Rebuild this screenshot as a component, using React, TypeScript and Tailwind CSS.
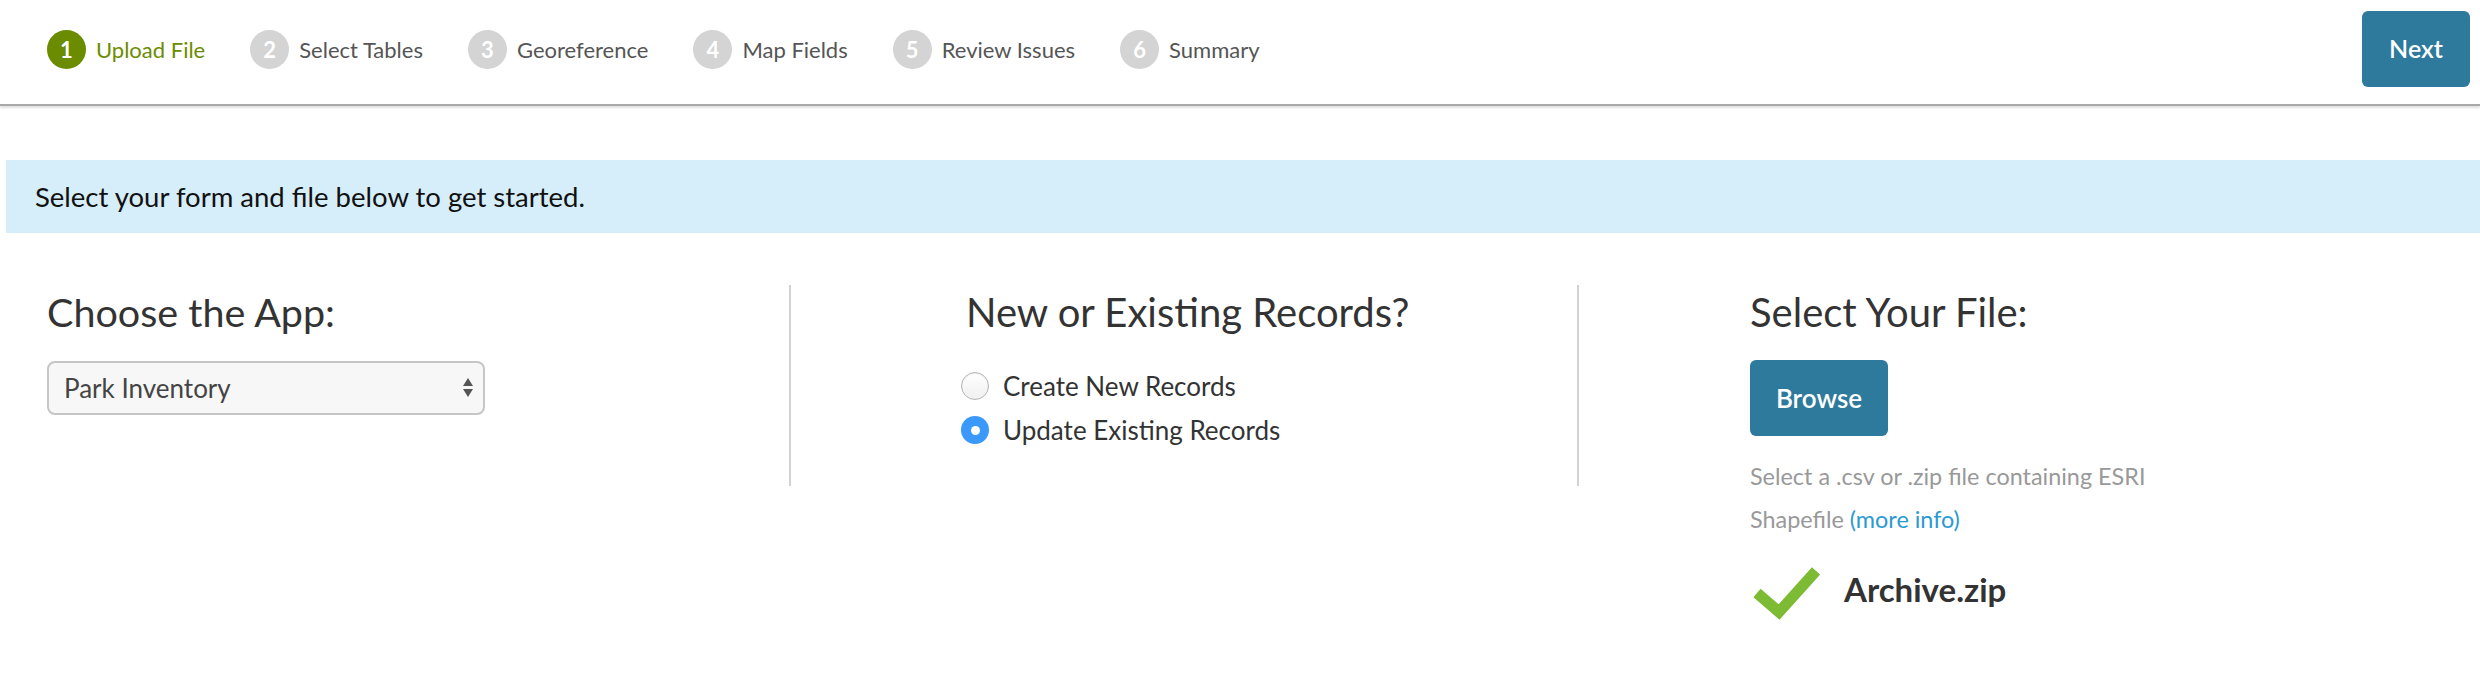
const steps = [
  "Upload File",
  "Select Tables",
  "Georeference",
  "Map Fields",
  "Review Issues",
  "Summary",
];

function Step({ n, label, active }: { n: number; label: string; active: boolean }) {
  return (
    <div className="flex items-center gap-[10px]">
      <div
        className={
          active
            ? "flex h-[39px] w-[39px] items-center justify-center rounded-full bg-[#6b8c00] text-[22px] font-bold text-white"
            : "flex h-[39px] w-[39px] items-center justify-center rounded-full bg-[#d4d4d4] text-[22px] font-bold text-white"
        }
      >
        {n}
      </div>
      <span className={active ? "text-[22px] text-[#6b8c00]" : "text-[22px] text-[#555]"}>
        {label}
      </span>
    </div>
  );
}

function Radio({ checked, label }: { checked: boolean; label: string }) {
  return (
    <div className="flex h-[44px] items-center gap-[14px]">
      {checked ? (
        <div className="flex h-[28px] w-[28px] items-center justify-center rounded-full bg-[#3b99fc]">
          <div className="h-[9px] w-[9px] rounded-full bg-white" />
        </div>
      ) : (
        <div className="h-[28px] w-[28px] rounded-full border border-[#b4b4b4] bg-gradient-to-b from-white to-[#f0f0f0] shadow-[inset_0_1px_1px_rgba(0,0,0,0.08)]" />
      )}
      <span className="text-[26px] text-[#333]">{label}</span>
    </div>
  );
}

export default function App() {
  return (
    <div className="min-h-[692px] bg-white font-['Lato','Liberation_Sans',sans-serif]">
      {/* wizard header */}
      <header className="flex h-[106px] items-center justify-between border-b-2 border-[#a9a9a9] pl-[47px] pr-[10px] shadow-[0_2px_2px_rgba(0,0,0,0.12)]">
        <div className="mb-[5px] flex items-center gap-[45px]">
          {steps.map((s, i) => (
            <Step key={s} n={i + 1} label={s} active={i === 0} />
          ))}
        </div>
        <button className="mb-[6px] h-[76px] w-[108px] rounded-[6px] bg-[#2e7a9c] text-[25px] font-semibold text-white">
          Next
        </button>
      </header>

      <div className="ml-[6px] mt-[54px] flex h-[73px] items-center bg-[#d6eefa] pl-[29px]">
        <p className="text-[27.5px] text-[#111]">Select your form and file below to get started.</p>
      </div>

      <div className="mt-[52px] flex items-start">
        <div className="h-[201px] w-[791px] border-r-2 border-[#d2d2d2] pl-[47px] pt-[3px]">
          <h2 className="text-[39.5px] leading-[48px] text-[#333]">Choose the App:</h2>
          <div className="mt-[25px] flex h-[54px] w-[438px] items-center justify-between rounded-[8px] border-2 border-[#c6c6c6] bg-[#f7f7f7] pl-[15px] pr-[9px]">
            <span className="text-[26px] text-[#444]">Park Inventory</span>
            <svg width="12" height="22" viewBox="0 0 12 22">
              <path d="M6 1 L11 9 L1 9 Z" fill="#555" />
              <path d="M1 12 L11 12 L6 20 Z" fill="#555" />
            </svg>
          </div>
        </div>

        <div className="h-[201px] w-[788px] border-r-2 border-[#d2d2d2] pl-[175px] pt-[3px]">
          <h2 className="text-[40px] leading-[48px] text-[#333]">New or Existing Records?</h2>
          <div className="-ml-[5px] mt-[28px]">
            <Radio checked={false} label="Create New Records" />
            <Radio checked={true} label="Update Existing Records" />
          </div>
        </div>

        <div className="pl-[171px] pt-[3px]">
          <h2 className="text-[40px] leading-[48px] text-[#333]">Select Your File:</h2>
          <button className="mt-[24px] h-[76px] w-[138px] rounded-[6px] bg-[#2e7a9c] text-[26px] font-semibold text-white">
            Browse
          </button>
          <p className="mt-[19px] w-[440px] text-[23.4px] leading-[43px] text-[#999]">
            Select a .csv or .zip file containing ESRI Shapefile{" "}
            <a className="text-[#2b9ad3]">(more info)</a>
          </p>
          <div className="mt-[23px] flex items-start gap-[24px]">
            <svg width="70" height="58" viewBox="0 0 70 58">
              <polyline points="7,29 29,48 66,7" fill="none" stroke="#7dbb35" strokeWidth="11" />
            </svg>
            <span className="mt-[1px] text-[33px] font-bold text-[#333]">Archive.zip</span>
          </div>
        </div>
      </div>
    </div>
  );
}
